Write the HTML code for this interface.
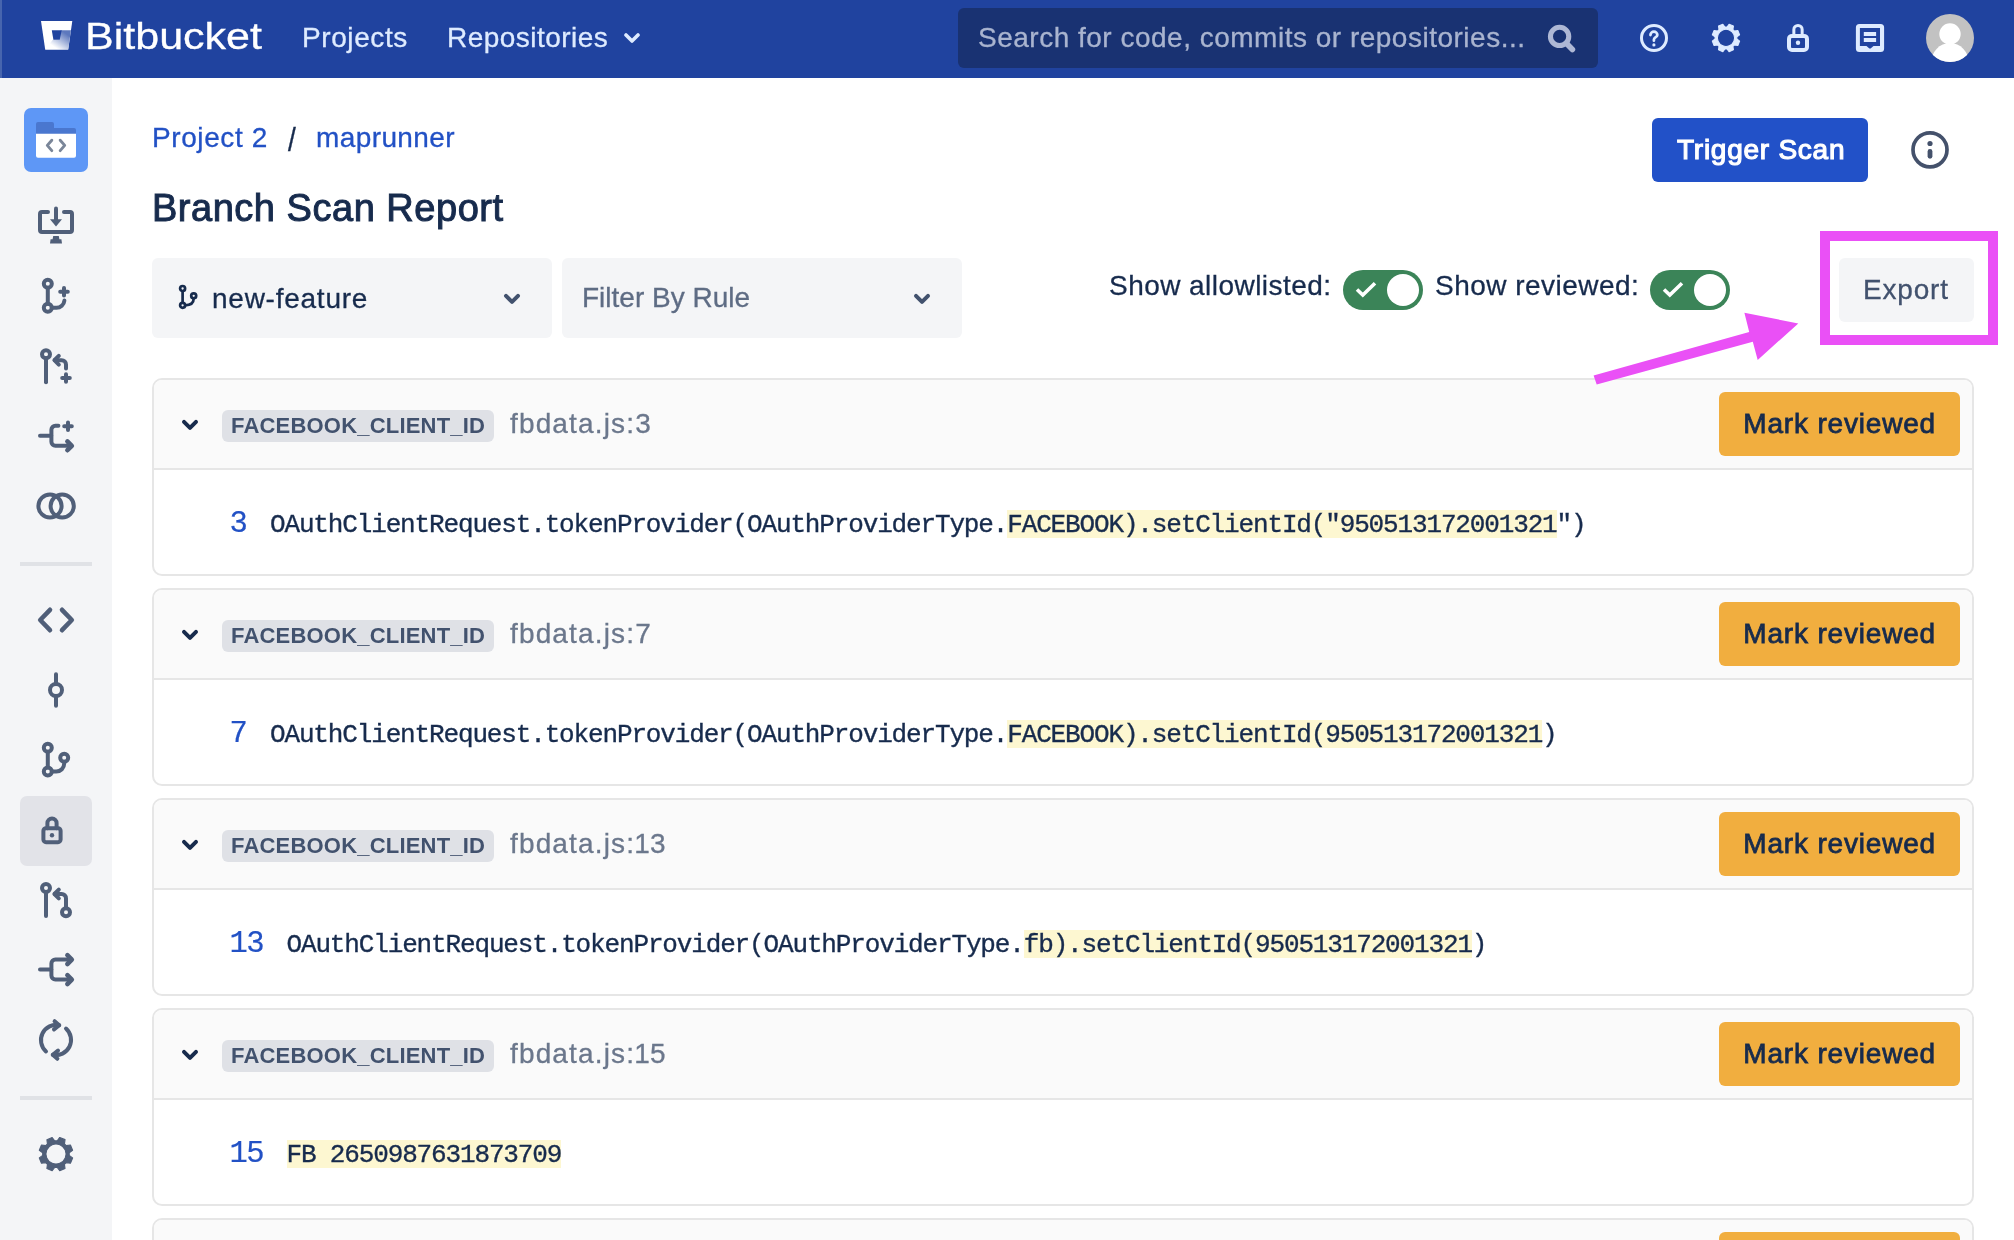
<!DOCTYPE html>
<html>
<head>
<meta charset="utf-8">
<title>Branch Scan Report</title>
<style>
*{box-sizing:border-box;margin:0;padding:0}
html,body{width:2014px;height:1240px;overflow:hidden;background:#fff}
body{font-family:"Liberation Sans",sans-serif;color:#172b4d;position:relative;will-change:transform}
.abs{position:absolute}
.t{position:absolute;white-space:pre;line-height:1;-webkit-text-stroke:.3px}
/* NAV */
#nav{position:absolute;left:0;top:0;width:2014px;height:78px;background:#20439f}
#nav .t{color:#deebff;font-size:28px}
#search{position:absolute;left:958px;top:8px;width:639.5px;height:60px;border-radius:6px;background:#193272}
/* SIDEBAR */
#side{position:absolute;left:0;top:78px;width:112px;height:1162px;background:#f4f5f7}
#side svg{position:absolute;overflow:visible}
.ic{fill:none;stroke:#505f79;stroke-width:2;stroke-linecap:round;stroke-linejoin:round}
.hr{position:absolute;left:20px;width:72px;height:4px;background:#e0e2e6}
/* MAIN */
.link{color:#2251c5}
.sel{position:absolute;top:258px;height:80px;width:400px;background:#f4f5f7;border-radius:6px}
.card{position:absolute;left:152px;width:1822px;height:198px;border:2px solid #e6e6e6;border-radius:10px;background:#fff;overflow:hidden}
.card .hd{position:absolute;left:0;top:0;width:100%;height:90px;background:#fafafa;border-bottom:2px solid #e6e6e6}
.tag{position:absolute;left:68px;top:30px;width:272px;height:32px;border-radius:6px;background:#dfe1e6}
.tag span{position:absolute;left:9px;top:5px;font-size:22px;font-weight:700;color:#42526e;line-height:1;white-space:pre;letter-spacing:.2px}
.fn{position:absolute;left:356px;top:30px;font-size:28px;color:#6b778c;line-height:1;white-space:pre;letter-spacing:1.15px;-webkit-text-stroke:.3px}
.btn{position:absolute;left:1565px;top:12px;width:241px;height:64px;border-radius:6px;background:#f1ae3f}
.btn span{position:absolute;left:24.300px;top:17.800px;font-size:28px;color:#172b4d;line-height:1;white-space:pre;-webkit-text-stroke:.8px #172b4d;letter-spacing:.82px}
.ln{position:absolute;top:128.800px;font-family:"Liberation Mono",monospace;font-size:30.500px;letter-spacing:-1.440px;-webkit-text-stroke:.2px #2251c5;color:#2251c5;line-height:1;white-space:pre}
.code{position:absolute;top:132px;font-family:"Liberation Mono",monospace;font-size:26px;letter-spacing:-1.147px;-webkit-text-stroke:.35px #172b4d;color:#172b4d;line-height:1;white-space:pre}
.code b{font-weight:400;background:linear-gradient(#fdf7d1,#fdf7d1) 0 0/100% 28px no-repeat}
.chev{position:absolute;left:26px;top:37px}
</style>
</head>
<body>
<!-- NAV -->
<div id="nav"><div class="abs" style="left:0;top:0;width:2px;height:78px;background:#4765ae"></div>
  <svg class="abs" style="left:41px;top:21px" width="32" height="29" viewBox="0 0 32 29">
    <defs><linearGradient id="lg" x1="1" y1="0.35" x2="0.45" y2="0.95"><stop offset="0" stop-color="#5d78bd"/><stop offset="1" stop-color="#ffffff"/></linearGradient></defs>
    <path d="M0 0H31.300L27.200 28.600H4.200Z" fill="#fff"/>
    <path d="M29.900 9.200H19.700L18.200 18.700H11.800L4.200 28.600H27.200Z" fill="url(#lg)"/>
    <path d="M10.800 9.200H20.700L18.700 18.700H12.400Z" fill="#20439f"/>
  </svg>
  <div class="t" id="wm" style="left:84.500px;top:17.500px;font-size:37px;color:#fff;transform-origin:0 0;transform:scaleX(1.163)">Bitbucket</div>
  <div class="t" style="left:302px;top:24px;letter-spacing:.6px">Projects</div>
  <div class="t" style="left:447px;top:24px;letter-spacing:.47px">Repositories</div>
  <svg class="abs" style="left:624px;top:32px" width="16" height="12" viewBox="0 0 16 12"><path d="M2 3L8 9L14 3" fill="none" stroke="#deebff" stroke-width="3.6" stroke-linecap="round" stroke-linejoin="round"/></svg>
  <div id="search"></div>
  <div class="t" style="left:978px;top:24px;color:#a9b4cf;letter-spacing:.5px">Search for code, commits or repositories...</div>
  <svg class="abs" style="left:1547px;top:24px" width="32" height="32" viewBox="0 0 32 32"><circle cx="12.600" cy="12.400" r="9.150" fill="none" stroke="#aeb8d5" stroke-width="5.100"/><path d="M19.800 19.800L25.400 25.500" stroke="#aeb8d5" stroke-width="5.600" stroke-linecap="round"/></svg>
  <!-- help -->
  <svg class="abs" style="left:1638px;top:22px" width="32" height="32" viewBox="0 0 32 32"><circle cx="16" cy="16" r="12.5" fill="none" stroke="#deebff" stroke-width="3"/><path d="M12.450 13.050a3.450 3.450 0 0 1 6.900 0c0 2-3.450 2.300-3.450 4.500v1.100" fill="none" stroke="#deebff" stroke-width="2.700" stroke-linecap="round" stroke-linejoin="round"/><circle cx="15.900" cy="22.900" r="1.600" fill="#deebff"/></svg>
  <!-- gear -->
  <svg class="abs" style="left:1710px;top:22px" width="32" height="32" viewBox="0 0 32 32"><path transform="translate(16 15.900) scale(1.560) rotate(22.500) translate(-12 -12)" fill-rule="evenodd" fill="#deebff" stroke="#deebff" stroke-width=".7" stroke-linejoin="round" d="M10.500 3.200h3l.55 2.150 1.250.52 1.900-1.130 2.120 2.120-1.130 1.900.52 1.250 2.150.55v3l-2.150.55-.52 1.250 1.130 1.900-2.120 2.120-1.900-1.130-1.250.52-.55 2.150h-3l-.55-2.150-1.250-.52-1.900 1.130-2.120-2.120 1.130-1.900-.52-1.250-2.150-.55v-3l2.150-.55.52-1.250-1.130-1.900 2.120-2.120 1.900 1.130 1.250-.52zM12 6.500a5.500 5.500 0 1 0 0 11 5.500 5.500 0 0 0 0-11z"/></svg>
  <!-- lock -->
  <svg class="abs" style="left:1782px;top:20px" width="32" height="36" viewBox="0 0 32 36"><rect x="7" y="15.900" width="18" height="14.100" rx="3" fill="none" stroke="#deebff" stroke-width="4"/><path d="M11.850 15.900V9.550a4.150 4.150 0 0 1 8.300 0V15.900" fill="none" stroke="#deebff" stroke-width="3"/><circle cx="16" cy="22.800" r="2.200" fill="#deebff"/></svg>
  <!-- note -->
  <svg class="abs" style="left:1854px;top:22px" width="32" height="32" viewBox="0 0 32 32"><path fill-rule="evenodd" fill="#deebff" d="M5.400 1.900h21.200a3.500 3.500 0 0 1 3.500 3.500v21.100a3.500 3.500 0 0 1-3.500 3.500H5.400a3.500 3.500 0 0 1-3.500-3.500V5.400a3.500 3.500 0 0 1 3.500-3.500zM5.900 6v17.900h6.600l2.300 2a1.700 1.700 0 0 0 2.400 0l2.300-2h6.500V6z"/><rect x="9.800" y="10" width="12.300" height="4" fill="#deebff"/><rect x="9.800" y="16" width="12.300" height="4" fill="#deebff"/></svg>
  <!-- avatar -->
  <svg class="abs" style="left:1926px;top:14px" width="48" height="48" viewBox="0 0 48 48"><defs><clipPath id="cav"><circle cx="24" cy="24" r="24"/></clipPath></defs><circle cx="24" cy="24" r="24" fill="#c2c2c2"/><g clip-path="url(#cav)" fill="#fff"><circle cx="24" cy="20" r="10.700"/><ellipse cx="24" cy="49.100" rx="19" ry="20"/></g></svg>
</div>

<!-- SIDEBAR -->
<div id="side">
  <div class="abs" style="left:24px;top:30px;width:64px;height:64px;border-radius:7px;background:#5e97f6"></div>
  <svg style="left:36px;top:44.400px" width="40" height="38" viewBox="0 0 40 38"><path d="M0 2a2 2 0 0 1 2-2h14a2 2 0 0 1 2 2v4h20a2 2 0 0 1 2 2v5H0z" fill="#4a77cf"/><path d="M0 11.700h40v22a2 2 0 0 1-2 2H2a2 2 0 0 1-2-2z" fill="#fff"/><path d="M15.800 18.200L11.300 23.400l4.500 5.200M24.200 18.200l4.500 5.200-4.500 5.200" fill="none" stroke="#7a8699" stroke-width="2.900" stroke-linecap="round" stroke-linejoin="round"/></svg>
  <div class="hr" style="top:484px"></div>
  <div class="abs" style="left:20px;top:718px;width:72px;height:70px;border-radius:7px;background:#e2e3e8"></div>
  <div class="hr" style="top:1018px"></div>
  <svg class="ic" style="left:32px;top:122px" width="48" height="48" viewBox="0 0 24 24" stroke-width="2"><path d="M8 6H5a1 1 0 0 0-1 1v8a1 1 0 0 0 1 1h14a1 1 0 0 0 1-1V7a1 1 0 0 0-1-1h-3"/><path d="M12 4.200v7"/><path d="M9 9.600h6l-3 3.600z" fill="#505f79" stroke="none"/><path d="M10.600 18h2.800l.3 1.600h1l.3 2.200H9l.3-2.200h1z" fill="#505f79" stroke="none"/></svg>
<svg class="ic" style="left:32px;top:194px" width="48" height="48" viewBox="0 0 24 24" stroke-width="2"><circle cx="7.900" cy="5.900" r="2"/><circle cx="7.900" cy="17.900" r="2"/><path d="M7.900 7.900v8M9.900 17.900h2.300a4 4 0 0 0 4-3.600"/><path d="M16 8v3.800M14.100 9.900h3.800"/></svg>
<svg class="ic" style="left:32px;top:264px" width="48" height="48" viewBox="0 0 24 24" stroke-width="2"><circle cx="7" cy="6.100" r="2"/><path d="M7 8.100v12"/><path d="M11.400 9.100h3.400a2.200 2.200 0 0 1 2.200 2.200v1.900"/><path d="M13.400 6.900l-2.200 2.200 2.200 2.200"/><path d="M17 16.100v3.800M15.100 18h3.800"/></svg>
<svg class="ic" style="left:32px;top:334px" width="48" height="48" viewBox="0 0 24 24" stroke-width="2"><path d="M4 11.900h5.600"/><path d="M13.200 6.900h-1.500a2 2 0 0 0-2 2v6a2 2 0 0 0 2 2h8"/><path d="M17.700 14.700l2.200 2.200-2.200 2.200" stroke-width="2.300"/><path d="M18 5.200v3.800M16.100 7.100h3.800"/></svg>
<svg class="ic" style="left:32px;top:404px" width="48" height="48" viewBox="0 0 24 24" stroke-width="2"><circle cx="9" cy="12" r="5.800"/><circle cx="15.100" cy="12" r="5.800"/></svg>
<svg class="ic" style="left:32px;top:518px" width="48" height="48" viewBox="0 0 24 24" stroke-width="2"><path d="M9 6.900L4.100 12l4.900 5.100M15 6.900l4.900 5.100-4.900 5.100" stroke-width="2.300"/></svg>
<svg class="ic" style="left:32px;top:588px" width="48" height="48" viewBox="0 0 24 24" stroke-width="2"><circle cx="12" cy="12" r="3"/><path d="M12 4.100v4.900M12 15v4.900"/></svg>
<svg class="ic" style="left:32px;top:658px" width="48" height="48" viewBox="0 0 24 24" stroke-width="2"><circle cx="7.900" cy="5.900" r="2"/><circle cx="7.900" cy="17.800" r="2"/><circle cx="16.100" cy="10.900" r="2"/><path d="M7.900 7.900v7.900M9.900 17.800h2.200a4 4 0 0 0 4-4v-.9"/></svg>
<svg class="ic" style="left:28px;top:729px" width="48" height="48" viewBox="0 0 24 24" stroke-width="2"><rect x="7.700" y="10.600" width="8.600" height="7" rx="1.300"/><path d="M9.700 10.600V8.100a2.300 2.300 0 0 1 4.600 0v2.500"/><circle cx="12" cy="14.100" r="1.100" fill="#505f79" stroke="none"/></svg>
<svg class="ic" style="left:32px;top:799px" width="48" height="48" viewBox="0 0 24 24" stroke-width="2"><circle cx="7" cy="5.500" r="2"/><path d="M7 7.500v12"/><path d="M11.400 8.500h3.400a2.200 2.200 0 0 1 2.200 2.200v4.900"/><path d="M13.400 6.300l-2.200 2.200 2.200 2.200"/><circle cx="17" cy="17.600" r="2"/></svg>
<svg class="ic" style="left:32px;top:868px" width="48" height="48" viewBox="0 0 24 24" stroke-width="2"><path d="M4 11.800h5.600"/><path d="M19.700 6.800h-8a2 2 0 0 0-2 2v6a2 2 0 0 0 2 2h8"/><path d="M17.700 4.600l2.200 2.200-2.200 2.200M17.700 14.600l2.200 2.200-2.200 2.200" stroke-width="2.300"/></svg>
<svg class="ic" style="left:32px;top:938px" width="48" height="48" viewBox="0 0 24 24" stroke-width="2"><path d="M7 17.700A7.600 7.600 0 0 1 13.600 4.600"/><path d="M17 6.300A7.600 7.600 0 0 1 10.400 19.400"/><path d="M11.300 2.600l2.300 2-2.600 2.100"/><path d="M12.700 21.400l-2.300-2 2.600-2.100"/></svg>
<svg class="ic" style="left:31.5px;top:1051.5px" width="48" height="48" viewBox="0 0 24 24" stroke-width="2"><path transform="translate(12 12) scale(.95) rotate(22.500) translate(-12 -12)" fill-rule="evenodd" fill="#505f79" stroke="#505f79" stroke-width=".6" stroke-linejoin="round" d="M10.500 3.200h3l.55 2.150 1.250.52 1.900-1.130 2.120 2.120-1.130 1.900.52 1.250 2.150.55v3l-2.150.55-.52 1.250 1.130 1.900-2.120 2.120-1.900-1.130-1.250.52-.55 2.150h-3l-.55-2.150-1.250-.52-1.900 1.130-2.120-2.120 1.130-1.900-.52-1.250-2.150-.55v-3l2.150-.55.52-1.250-1.130-1.900 2.120-2.120 1.900 1.130 1.250-.52zM12 6.700a5.300 5.300 0 1 0 0 10.600 5.300 5.300 0 0 0 0-10.600z"/></svg>

</div>

<!-- MAIN HEADER -->
<div class="t link" style="left:152px;top:124px;font-size:28px;letter-spacing:.6px">Project 2</div>
<div class="t" style="left:288px;top:125px;font-size:28px;transform-origin:50% 15%;transform:scaleY(1.160);-webkit-text-stroke:.3px #172b4d">/</div>
<div class="t link" style="left:316px;top:124px;font-size:28px;letter-spacing:.4px">maprunner</div>
<div class="t" id="title" style="left:152px;top:188.500px;font-size:38px;letter-spacing:.52px;-webkit-text-stroke:1px #172b4d">Branch Scan Report</div>

<div class="abs" style="left:1652px;top:118px;width:216px;height:64px;border-radius:6px;background:#2251c8"></div>
<div class="t" style="left:1677px;top:136px;font-size:28px;color:#fff;letter-spacing:.75px;-webkit-text-stroke:1.150px #fff">Trigger Scan</div>
<svg class="abs" style="left:1910px;top:130px" width="40" height="40" viewBox="0 0 40 40"><circle cx="20" cy="19.800" r="17" fill="none" stroke="#44516b" stroke-width="3.700"/><circle cx="20" cy="13.500" r="2.600" fill="#44516b"/><path d="M20 21.400v4.900" fill="none" stroke="#44516b" stroke-width="4.800" stroke-linecap="round"/></svg>

<div class="sel" style="left:152px"></div>
<div class="sel" style="left:562px"></div>
<svg class="abs" style="left:176px;top:283px" width="24" height="28" viewBox="0 0 24 28"><g fill="none" stroke="#172b4d" stroke-width="2.700"><circle cx="6.600" cy="5.500" r="2.500"/><circle cx="6.600" cy="22.300" r="2.500"/><circle cx="17.700" cy="12.800" r="2.500"/><path d="M6.600 8v11.800M17.700 15.300c0 4.800-3.600 7-8.600 7"/></g></svg>
<div class="t" style="left:212px;top:285px;font-size:28px;letter-spacing:.75px">new-feature</div>
<svg class="abs" style="left:502px;top:291px" width="20" height="16" viewBox="0 0 20 16"><path d="M4 4.800L10 10.800L16 4.800" fill="none" stroke="#42526e" stroke-width="4" stroke-linecap="round" stroke-linejoin="round"/></svg>
<div class="t" style="left:582px;top:284px;font-size:28px;color:#5e6c84;letter-spacing:0px">Filter By Rule</div>
<svg class="abs" style="left:912px;top:291px" width="20" height="16" viewBox="0 0 20 16"><path d="M4 4.800L10 10.800L16 4.800" fill="none" stroke="#42526e" stroke-width="4" stroke-linecap="round" stroke-linejoin="round"/></svg>

<div class="t" style="left:1109px;top:272px;font-size:28px;letter-spacing:.45px">Show allowlisted:</div>
<div class="abs" style="left:1343px;top:270px;width:80px;height:40px;border-radius:20px;background:#3b8458"></div>
<div class="abs" style="left:1387px;top:274px;width:32px;height:32px;border-radius:16px;background:#fff"></div>
<svg class="abs" style="left:1354px;top:279px" width="26" height="22" viewBox="0 0 26 22"><path d="M4.300 11.700L8.800 16L19.700 5.500" fill="none" stroke="#fff" stroke-width="3.600" stroke-linecap="square" stroke-linejoin="miter"/></svg>
<div class="t" style="left:1435px;top:272px;font-size:28px;letter-spacing:.47px">Show reviewed:</div>
<div class="abs" style="left:1650px;top:270px;width:80px;height:40px;border-radius:20px;background:#3b8458"></div>
<div class="abs" style="left:1694px;top:274px;width:32px;height:32px;border-radius:16px;background:#fff"></div>
<svg class="abs" style="left:1661px;top:279px" width="26" height="22" viewBox="0 0 26 22"><path d="M4.300 11.700L8.800 16L19.700 5.500" fill="none" stroke="#fff" stroke-width="3.600" stroke-linecap="square" stroke-linejoin="miter"/></svg>
<div class="abs" style="left:1839px;top:258px;width:135px;height:64px;border-radius:6px;background:#f4f5f7"></div>
<div class="t" style="left:1863px;top:276px;font-size:28px;color:#42526e;letter-spacing:.8px">Export</div>

<div class="card" style="top:378px"><div class="hd"></div>
<svg class="chev" width="20" height="16" viewBox="0 0 20 16"><path d="M4 4.800L10 10.800L16 4.800" fill="none" stroke="#172b4d" stroke-width="4" stroke-linecap="round" stroke-linejoin="round"/></svg>
<div class="tag"><span>FACEBOOK_CLIENT_ID</span></div><div class="fn">fbdata.js:3</div>
<div class="btn"><span>Mark reviewed</span></div>
<div class="ln" style="left:75.500px">3</div><div class="code" style="left:116px">OAuthClientRequest.tokenProvider(OAuthProviderType.<b>FACEBOOK).setClientId("950513172001321</b>")</div></div>
<div class="card" style="top:588px"><div class="hd"></div>
<svg class="chev" width="20" height="16" viewBox="0 0 20 16"><path d="M4 4.800L10 10.800L16 4.800" fill="none" stroke="#172b4d" stroke-width="4" stroke-linecap="round" stroke-linejoin="round"/></svg>
<div class="tag"><span>FACEBOOK_CLIENT_ID</span></div><div class="fn">fbdata.js:7</div>
<div class="btn"><span>Mark reviewed</span></div>
<div class="ln" style="left:75.500px">7</div><div class="code" style="left:116px">OAuthClientRequest.tokenProvider(OAuthProviderType.<b>FACEBOOK).setClientId(950513172001321</b>)</div></div>
<div class="card" style="top:798px"><div class="hd"></div>
<svg class="chev" width="20" height="16" viewBox="0 0 20 16"><path d="M4 4.800L10 10.800L16 4.800" fill="none" stroke="#172b4d" stroke-width="4" stroke-linecap="round" stroke-linejoin="round"/></svg>
<div class="tag"><span>FACEBOOK_CLIENT_ID</span></div><div class="fn">fbdata.js:<span style="margin:0 -1px">1</span>3</div>
<div class="btn"><span>Mark reviewed</span></div>
<div class="ln" style="left:75.500px">13</div><div class="code" style="left:132.5px">OAuthClientRequest.tokenProvider(OAuthProviderType.<b>fb).setClientId(950513172001321</b>)</div></div>
<div class="card" style="top:1008px"><div class="hd"></div>
<svg class="chev" width="20" height="16" viewBox="0 0 20 16"><path d="M4 4.800L10 10.800L16 4.800" fill="none" stroke="#172b4d" stroke-width="4" stroke-linecap="round" stroke-linejoin="round"/></svg>
<div class="tag"><span>FACEBOOK_CLIENT_ID</span></div><div class="fn">fbdata.js:<span style="margin:0 -1px">1</span>5</div>
<div class="btn"><span>Mark reviewed</span></div>
<div class="ln" style="left:75.500px">15</div><div class="code" style="left:132.5px"><b>FB 2650987631873709</b></div></div>
<div class="card" style="top:1218px"><div class="hd"></div>
<svg class="chev" width="20" height="16" viewBox="0 0 20 16"><path d="M4 4.800L10 10.800L16 4.800" fill="none" stroke="#172b4d" stroke-width="4" stroke-linecap="round" stroke-linejoin="round"/></svg>
<div class="tag"><span>FACEBOOK_CLIENT_ID</span></div><div class="fn">fbdata.js:<span style="margin:0 -1px">1</span>7</div>
<div class="btn"><span>Mark reviewed</span></div>
<div class="ln" style="left:75.500px">17</div><div class="code" style="left:132.5px"></div></div>


<svg class="abs" style="left:1580px;top:220px" width="434" height="180" viewBox="1580 220 434 180"><rect x="1825" y="236" width="168" height="104" fill="none" stroke="#ea50f6" stroke-width="10"/><path d="M1593.600 375.400L1749.200 332.100L1744.400 312.800L1798.300 323.400L1757.700 359.900L1752.800 341.700L1596.700 384.500Z" fill="#ea50f6"/></svg>
</body>
</html>
